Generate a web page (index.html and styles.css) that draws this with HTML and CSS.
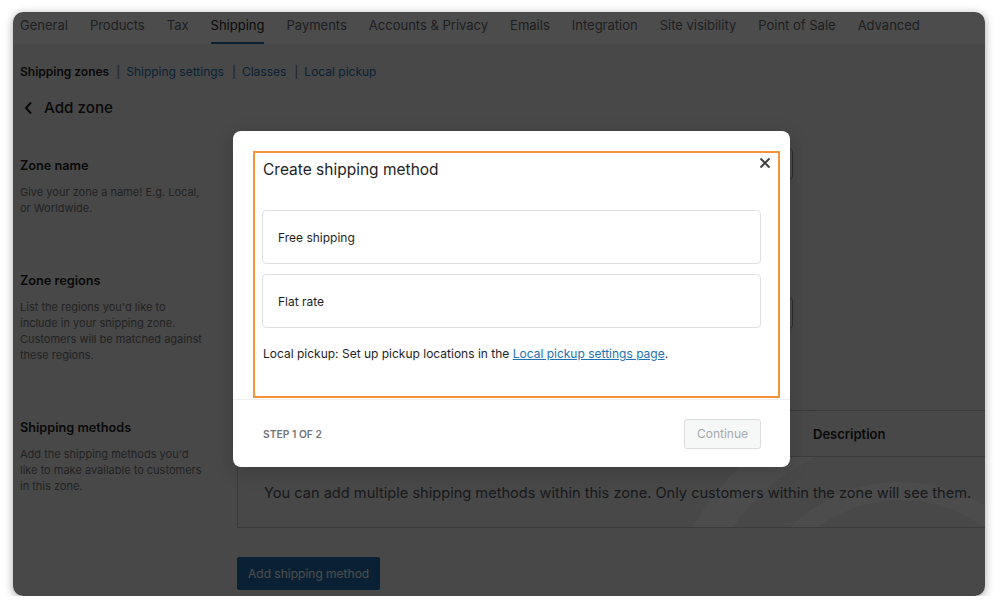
FILE: index.html
```html
<!DOCTYPE html>
<html lang="en">

<head>
  <meta charset="UTF-8">
  <meta name="viewport" content="width=device-width, initial-scale=1.0">
  <title>Shipping zones - Add zone</title>
  <link rel="stylesheet" href="styles.css">
</head>

<body>
  <div class="window">
    <div class="wp-page">
      <nav class="tabs">
        <a href="#">General</a>
        <a href="#">Products</a>
        <a href="#">Tax</a>
        <a href="#" class="active">Shipping</a>
        <a href="#">Payments</a>
        <a href="#">Accounts &amp; Privacy</a>
        <a href="#">Emails</a>
        <a href="#">Integration</a>
        <a href="#">Site visibility</a>
        <a href="#">Point of Sale</a>
        <a href="#">Advanced</a>
      </nav>

      <div class="content">
        <ul class="subnav">
          <li class="current">Shipping zones</li>
          <li><span class="sep">|</span><a href="#">Shipping settings</a></li>
          <li><span class="sep">|</span><a href="#">Classes</a></li>
          <li><span class="sep">|</span><a href="#">Local pickup</a></li>
        </ul>

        <h2 class="page-title">
          <svg class="back" width="10" height="14" viewBox="0 0 10 14">
            <path d="M8 1.5 L3 7 L8 12.5" fill="none" stroke="#1e1e1e" stroke-width="2" />
          </svg>
          Add zone
        </h2>

        <div class="section first">
          <div class="section-info">
            <h3>Zone name</h3>
            <p>Give your zone a name! E.g. Local, or Worldwide.</p>
          </div>
          <div class="section-field">
            <input type="text" class="text-input">
          </div>
        </div>

        <div class="section">
          <div class="section-info">
            <h3>Zone regions</h3>
            <p>List the regions you'd like to include in your shipping zone. Customers will be matched against these regions.</p>
          </div>
          <div class="section-field">
            <input type="text" class="text-input regions">
          </div>
        </div>

        <div class="section">
          <div class="section-info">
            <h3>Shipping methods</h3>
            <p>Add the shipping methods you'd like to make available to customers in this zone.</p>
          </div>
          <div class="section-field">
            <div class="methods-table">
              <div class="methods-head">
                <span></span>
                <span></span>
                <span></span>
                <span>Description</span>
              </div>
              <div class="methods-body">
                <svg class="watermark" viewBox="0 0 760 71">
                  <circle cx="663" cy="184" r="220" fill="none" stroke="#ffffff" stroke-width="34" />
                  <circle cx="663" cy="184" r="150" fill="none" stroke="#ffffff" stroke-width="18" />
                </svg>
                <p>You can add multiple shipping methods within this zone. Only customers within the zone will see them.</p>
              </div>
            </div>
            <button class="primary-btn">Add shipping method</button>
          </div>
        </div>
      </div>
    </div>

    <div class="overlay">
      <div class="modal">
        <button class="close-btn" aria-label="Close">
          <svg width="12" height="12" viewBox="0 0 12 12">
            <path d="M1.5 1.5 L10.5 10.5 M10.5 1.5 L1.5 10.5" stroke="#444" stroke-width="2" />
          </svg>
        </button>

        <div class="highlight">
          <h2 class="modal-title">Create shipping method</h2>
          <div class="options">
            <div class="option">Free shipping</div>
            <div class="option">Flat rate</div>
          </div>
          <p class="pickup-note">Local pickup: Set up pickup locations in the <a href="#">Local pickup settings page</a>.</p>
        </div>

        <div class="modal-footer">
          <span class="step">Step 1 of 2</span>
          <button class="continue-btn" disabled>Continue</button>
        </div>
      </div>
    </div>
  </div>
</body>

</html>
```

FILE: styles.css
```css
body {
  margin: 0;
  background-color: #fff;
  font-family: Inter, "Noto Sans", sans-serif;
  color: #1e1e1e;
}

.window {
  position: relative;
  width: 972px;
  height: 584px;
  margin: 12px 0 0 13px;
  border-radius: 10px;
  overflow: hidden;
  box-shadow: 0 2px 10px rgba(0, 0, 0, 0.35);
}

.wp-page {
  height: 100%;
  background-color: #f0f0f1;
}

/* top tabs */
.tabs {
  display: flex;
  gap: 22px;
  height: 32px;
  padding-left: 7px;
  background-color: #fff;
}

.tabs a {
  font-size: 13px;
  line-height: 26px;
  padding-bottom: 4px;
  border-bottom: 2px solid transparent;
  color: #646970;
  text-decoration: none;
  white-space: nowrap;
}

.tabs a.active {
  color: #1e1e1e;
  border-bottom-color: #2271b1;
}

.content {
  padding-left: 7px;
}

.subnav {
  display: flex;
  margin: 19px 0 0;
  padding: 0;
  list-style: none;
  font-size: 12px;
  line-height: 18px;
}

.subnav .current {
  font-weight: 600;
  color: #1e1e1e;
}

.subnav a {
  color: #2271b1;
  text-decoration: none;
}

.subnav .sep {
  color: #646970;
  margin: 0 6px 0 7px;
}

.subnav li + li + li .sep {
  margin-left: 8px;
}

.page-title {
  display: flex;
  align-items: center;
  gap: 11px;
  margin: 15px 0 0;
  padding-left: 3px;
  font-size: 15.2px;
  line-height: 24px;
  font-weight: 500;
}

/* settings sections */
.section {
  display: grid;
  grid-template-columns: 217px 1fr;
  margin-top: 47px;
}

.section.first {
  margin-top: 28px;
}

.section-info {
  padding-top: 8px;
}

.section-info h3 {
  margin: 0;
  font-size: 12.7px;
  line-height: 19px;
  font-weight: 600;
}

.section-info p {
  max-width: 186px;
  margin: 9px 0 0;
  font-size: 11px;
  line-height: 16px;
  color: #757575;
}

.text-input {
  display: block;
  box-sizing: border-box;
  width: 556px;
  height: 32px;
  border: 1px solid #8c8f94;
  border-radius: 4px;
  background-color: #fff;
}

.text-input.regions {
  margin-top: 34px;
}

.methods-table {
  width: 760px;
  border: 1px solid #c3c4c7;
}

.methods-head {
  display: grid;
  grid-template-columns: 40px 300px 235px 1fr;
  height: 45px;
  align-items: center;
  border-bottom: 1px solid #c3c4c7;
  font-size: 13px;
  font-weight: 600;
}

.methods-body {
  position: relative;
  height: 70px;
  overflow: hidden;
}

.methods-body p {
  position: relative;
  margin: 0;
  padding: 25px 0 0 26px;
  font-size: 14.6px;
  line-height: 22px;
  color: #50575e;
  white-space: nowrap;
}

.watermark {
  position: absolute;
  top: 0;
  left: 0;
  width: 760px;
  height: 71px;
}

.primary-btn {
  margin-top: 29px;
  height: 33px;
  padding: 0 11px;
  border: none;
  border-radius: 2px;
  background-color: #2271b1;
  color: #fff;
  font-family: inherit;
  font-size: 12px;
}

/* modal */
.overlay {
  position: absolute;
  inset: 0;
  display: flex;
  align-items: flex-start;
  padding: 119px 0 0 220px;
  background-color: rgba(0, 0, 0, 0.7);
}

.modal {
  position: relative;
  width: 557px;
  background-color: #fff;
  border-radius: 8px;
  box-shadow: 0 4px 20px rgba(0, 0, 0, 0.15);
}

.close-btn {
  position: absolute;
  top: 26px;
  right: 19px;
  width: 12px;
  height: 12px;
  padding: 0;
  border: none;
  background: none;
  line-height: 0;
}

.highlight {
  margin: 20px 10px 1px 20px;
  padding: 5px 17px 32px 7px;
  border: 2px solid #f5933a;
}

.modal-title {
  margin: 0;
  padding-left: 1px;
  font-size: 15.5px;
  line-height: 24px;
  font-weight: 400;
}

.options {
  display: flex;
  flex-direction: column;
  gap: 10px;
  margin-top: 28px;
}

.option {
  display: flex;
  align-items: center;
  box-sizing: border-box;
  height: 54px;
  padding: 0 15px;
  border: 1px solid #e0e0e0;
  border-radius: 4px;
  font-size: 12px;
}

.pickup-note {
  margin: 16px 0 0;
  padding-left: 1px;
  font-size: 12px;
  line-height: 20px;
}

.pickup-note a {
  color: #2271b1;
}

.modal-footer {
  display: flex;
  justify-content: space-between;
  align-items: center;
  height: 67px;
  padding: 0 29px 0 30px;
  border-top: 1px solid #f0f0f0;
}

.step {
  font-size: 10.3px;
  font-weight: 600;
  text-transform: uppercase;
  color: #757575;
}

.continue-btn {
  height: 30px;
  padding: 0 12px;
  border: 1px solid #dcdcde;
  border-radius: 3px;
  background-color: #f6f7f7;
  color: #a7aaad;
  font-family: inherit;
  font-size: 12px;
}
```
